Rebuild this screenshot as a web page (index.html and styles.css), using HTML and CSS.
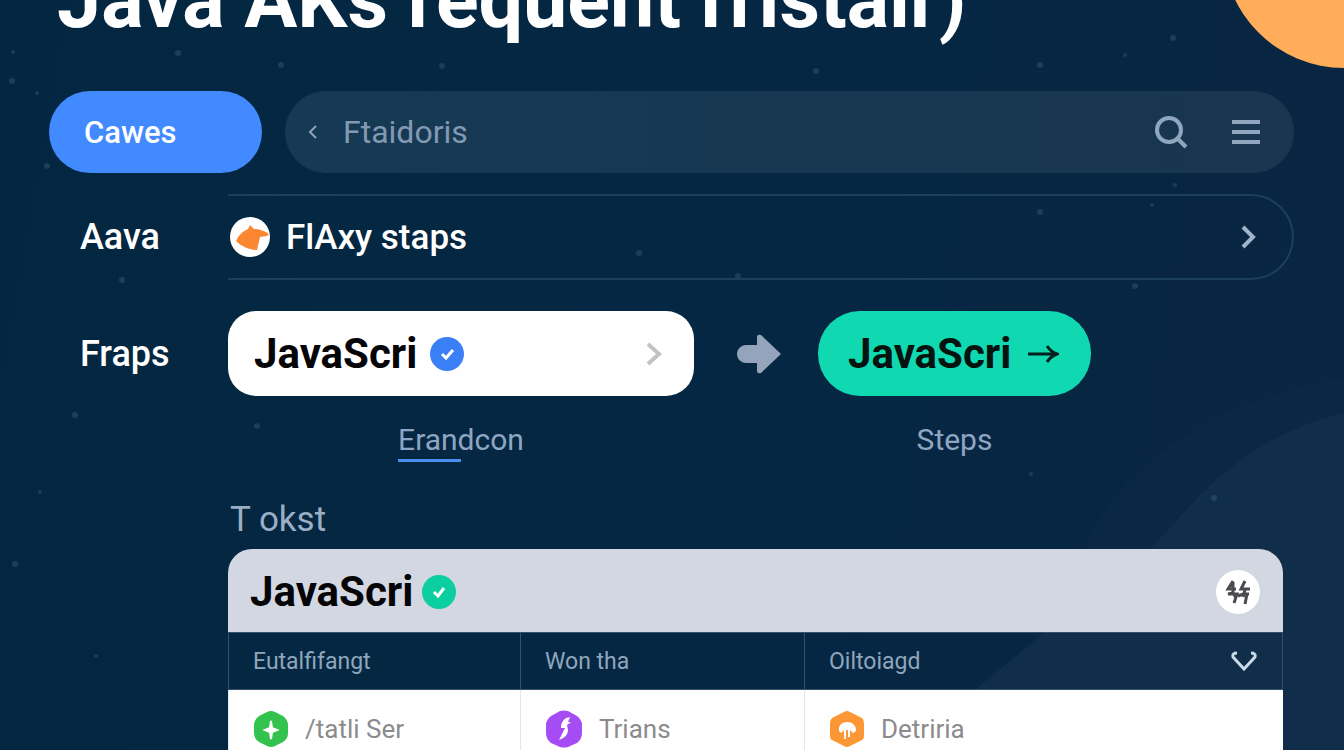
FILE: index.html
```
<!DOCTYPE html>
<html lang="en">
<head>
    <meta charset="utf-8">
    <title>Java steps</title>
    <link rel="stylesheet" href="styles.css">
</head>
<body>
    <!-- night sky behind the page -->
    <svg class="sky" viewBox="0 0 1344 750" preserveAspectRatio="xMaxYMin slice" aria-hidden="true">
        <path d="M1344 378C1240 395 1165 440 1120 490C1080 540 1050 620 1000 690V750H1344Z" fill="#0a2845"/>
        <path d="M1344 413C1280 428 1235 460 1200 495L1152 547C1110 590 1030 640 975 690V750H1344Z" fill="#102d49"/>
        <circle cx="1344" cy="-53" r="121" fill="#ffad5b"/>
        <g fill="#5d88a0" fill-opacity=".25">
            <circle cx="12" cy="81" r="3"/>
            <circle cx="13" cy="52" r="2"/>
            <circle cx="37" cy="93" r="2"/>
            <circle cx="178" cy="53" r="3"/>
            <circle cx="281" cy="65" r="3"/>
            <circle cx="442" cy="66" r="3"/>
            <circle cx="47" cy="166" r="3"/>
            <circle cx="122" cy="280" r="3"/>
            <circle cx="816" cy="71" r="3"/>
            <circle cx="1040" cy="65" r="3"/>
            <circle cx="1173" cy="38" r="3"/>
            <circle cx="1125" cy="55" r="2"/>
            <circle cx="639" cy="253" r="3"/>
            <circle cx="738" cy="276" r="3"/>
            <circle cx="1040" cy="212" r="3"/>
            <circle cx="1152" cy="205" r="2"/>
            <circle cx="1175" cy="185" r="2"/>
            <circle cx="1135" cy="286" r="3"/>
            <circle cx="75" cy="415" r="3"/>
            <circle cx="257" cy="426" r="3"/>
            <circle cx="15" cy="564" r="3"/>
            <circle cx="40" cy="492" r="2"/>
            <circle cx="96" cy="656" r="2"/>
            <circle cx="1214" cy="498" r="3"/>
            <circle cx="1031" cy="474" r="2"/>
        </g>
    </svg>

    <main class="page">
        <h1>Java AKs requent rristair)</h1>

        <div class="toolbar">
            <button class="primary">Cawes</button>
            <form class="search">
                <button type="button" class="icon-btn" aria-label="Back">
                    <svg width="12" height="16" viewBox="0 0 12 16"><path d="M9 2L3 8L9 14" fill="none" stroke="#8da3bb" stroke-width="2"/></svg>
                </button>
                <input type="text" value="Ftaidoris" aria-label="Search">
                <button type="submit" class="icon-btn" aria-label="Search">
                    <svg width="34" height="34" viewBox="0 0 34 34" fill="none" stroke="#8fa6be" stroke-width="4"><circle cx="15" cy="15" r="12"/><path d="M23 23L32 32"/></svg>
                </button>
                <button type="button" class="icon-btn" aria-label="Menu">
                    <svg width="28" height="24" viewBox="0 0 28 24" fill="#8fa6be"><path d="M0 0H28V4H0ZM0 10H28V14H0ZM0 20H28V24H0Z"/></svg>
                </button>
            </form>
        </div>

        <div class="row">
            <span class="label">Aava</span>
            <a class="step-link" href="#steps">
                <svg width="40" height="40" viewBox="0 0 40 40">
                    <circle cx="20" cy="20" r="20" fill="#fff"/>
                    <path d="M6 24C8 19 13 14 18 12L20 8L24 12C30 12 35 14 39 17L37 19L30 20C29 24 28 29 27 33C19 33 11 29 6 24Z" fill="#fc8732"/>
                </svg>
                <span class="step-name">FlAxy staps</span>
                <svg width="16" height="24" viewBox="0 0 16 24"><path d="M3 2L13 12L3 22" fill="none" stroke="#a3b3cc" stroke-width="4"/></svg>
            </a>
        </div>

        <div class="row" id="steps">
            <span class="label">Fraps</span>
            <div class="flow">
                <button class="card">
                    JavaScri
                    <svg width="36" height="36" viewBox="0 0 36 36"><circle cx="18" cy="18" r="17" fill="#3b7ff6"/><path d="M13 18L17 22L24 14" fill="none" stroke="#fff" stroke-width="3"/></svg>
                    <svg class="push" width="16" height="24" viewBox="0 0 16 24"><path d="M2 2L13 12L2 22" fill="none" stroke="#c3c3c5" stroke-width="4"/></svg>
                </button>
                <svg class="arrow" width="46" height="40" viewBox="0 0 46 40"><path d="M10 11H21V3Q21 0 25 1L45 20L25 39Q21 40 21 37V29H10C-2 28-2 12 10 11Z" fill="#94a4ba"/></svg>
                <button class="pill">
                    JavaScri
                    <svg width="32" height="20" viewBox="0 0 32 20"><path d="M1 10H30M20 2Q24 8 30 10Q24 12 20 18" fill="none" stroke="#03201e" stroke-width="3"/></svg>
                </button>
                <span class="caption active">Erandcon</span>
                <span class="caption second">Steps</span>
            </div>
        </div>

        <section class="panel">
            <h2>T okst</h2>
            <div class="panel-head">
                <span>JavaScri</span>
                <svg width="36" height="36" viewBox="0 0 36 36"><circle cx="18" cy="18" r="17" fill="#0ccf9f"/><path d="M13 18L17 22L23 14" fill="none" stroke="#fff" stroke-width="3"/></svg>
                <button class="icon-btn push" aria-label="Options">
                    <svg width="44" height="44" viewBox="0 0 44 44"><circle cx="22" cy="22" r="22" fill="#fff"/><path d="M17 11L12 19H20M17 12V23L12 24H21L18 33M17 23L20 28M29 11L25 19H34M22 26L27 24H33M29 20L27 27M31 24L29 34" fill="none" stroke="#4b4b4f" stroke-width="3"/></svg>
                </button>
            </div>
            <table>
                <thead>
                    <tr>
                        <th>Eutalfifangt</th>
                        <th>Won tha</th>
                        <th>
                            <div class="cell">
                                Oiltoiagd
                                <button class="icon-btn push" aria-label="Expand">
                                    <svg width="28" height="20" viewBox="0 0 28 20"><path d="M7 2Q2 2 3 6L14 18L25 6Q26 2 21 2" fill="none" stroke="#c9dbe8" stroke-width="3"/></svg>
                                </button>
                            </div>
                        </th>
                    </tr>
                </thead>
                <tbody>
                    <tr>
                        <td>
                            <div class="cell">
                                <svg width="36" height="38" viewBox="0 0 36 38"><path d="M14 2Q18 0 22 2L30 6Q35 10 35 15V23Q35 29 30 32L22 36Q18 38 14 36L6 32Q1 29 1 23V15Q1 10 6 6Z" fill="#32c24d"/><path d="M18 11L19 18L24 20L19 22L18 29L17 22L12 20L17 18Z" fill="#fff" stroke="#fff" stroke-width="2"/></svg>
                                /tatli Ser
                            </div>
                        </td>
                        <td>
                            <div class="cell">
                                <svg width="38" height="38" viewBox="0 0 38 38"><path d="M15 1Q19 0 23 1L32 6Q37 10 37 15V23Q37 29 32 33L23 37Q19 38 15 37L6 33Q1 29 1 23V15Q1 10 6 6Z" fill="#a64cf5"/><path d="M25 7Q16 8 16 18H20L14 30Q23 27 23 20L22 15L26 12H23Z" fill="#fff"/></svg>
                                Trians
                            </div>
                        </td>
                        <td>
                            <div class="cell">
                                <svg width="36" height="38" viewBox="0 0 36 38"><path d="M15 2Q18 0 21 2L33 8Q35 10 35 13V26Q35 29 33 30L21 36Q18 38 15 36L3 30Q1 29 1 26V13Q1 10 3 8Z" fill="#fd9735"/><path d="M10 21C8 9 28 9 27 21L24 23L21 20V27H19V20H17V29H15V20L12 23Z" fill="#fff"/></svg>
                                Detriria
                            </div>
                        </td>
                    </tr>
                </tbody>
            </table>
        </section>
    </main>
</body>
</html>
```
FILE: styles.css
```
* {
    box-sizing: border-box;
}

html {
    height: 100%;
    overflow: hidden;
}

body {
    margin: 0;
    height: 100%;
    overflow: hidden;
    font-family: Roboto, "Liberation Sans", sans-serif;
    color: #fff;
    background: linear-gradient(100deg, #042741, #052743 60%, #0a2541);
}

button, input {
    font: inherit;
    border: none;
    padding: 0;
    background: none;
}

button {
    cursor: pointer;
}

svg {
    flex: none;
    display: block;
}

.sky {
    position: absolute;
    top: 0;
    left: 0;
    width: 100%;
    height: 100%;
}

.page {
    position: relative;
    padding: 0 50px 0 49px;
}

h1 {
    margin: -44px 0 47px 8px;
    font-size: 79px;
    line-height: 88px;
    font-weight: 700;
    white-space: nowrap;
}

.toolbar {
    display: flex;
    gap: 23px;
    margin-bottom: 21px;
}

.primary {
    width: 213px;
    height: 82px;
    padding-left: 35px;
    border-radius: 41px;
    background: #418aff;
    color: #fff;
    font-size: 31px;
    font-weight: 500;
    text-align: left;
}

.search {
    flex: 1;
    display: flex;
    align-items: center;
    height: 82px;
    gap: 44px;
    padding: 0 34px 0 22px;
    border-radius: 41px;
    background: linear-gradient(90deg, #163a54, #19354f);
}

.search input {
    flex: 1;
    min-width: 0;
    margin-left: -20px;
    color: #8299b1;
    font-size: 32px;
    outline: none;
}

.row {
    display: flex;
    margin-bottom: 31px;
}

.label {
    width: 179px;
    flex: none;
    padding-left: 31px;
    font-size: 36px;
    line-height: 86px;
    font-weight: 500;
}

.step-link {
    flex: 1;
    display: flex;
    align-items: center;
    gap: 16px;
    height: 86px;
    padding: 0 36px 0 2px;
    border: 2px solid #1d405a;
    border-left: none;
    border-radius: 0 43px 43px 0;
    color: #fff;
    font-size: 35px;
    font-weight: 500;
    text-decoration: none;
}

.step-name {
    flex: 1;
}

.flow {
    flex: 1;
    display: grid;
    grid-template-columns: minmax(0, 466px) 124px 273px;
    align-items: center;
}

.card, .pill {
    display: flex;
    align-items: center;
    height: 85px;
    color: #050507;
    font-size: 42px;
    font-weight: 700;
}

.card {
    gap: 12px;
    padding: 0 32px 0 26px;
    border-radius: 28px;
    background: #fff;
}

.pill {
    gap: 16px;
    padding-left: 30px;
    border-radius: 42px;
    background: #10d9b2;
    color: #03130f;
}

.push {
    margin-left: auto;
}

.arrow {
    justify-self: center;
    margin-left: 6px;
}

.caption {
    position: relative;
    justify-self: center;
    margin-top: 24px;
    color: #8fa6c2;
    font-size: 30px;
    line-height: 40px;
}

.caption.second {
    grid-column: 3;
}

.caption.active::after {
    content: "";
    position: absolute;
    left: 0;
    bottom: -2px;
    width: 50%;
    height: 3px;
    background: #4a8ff0;
}

.panel {
    margin: 0 11px 0 179px;
}

h2 {
    margin: 0;
    padding-left: 2px;
    color: #9aafc6;
    font-size: 35px;
    line-height: 58px;
    font-weight: 400;
}

.panel-head {
    display: flex;
    align-items: center;
    gap: 8px;
    height: 83px;
    padding: 2px 23px 0 22px;
    border-radius: 24px 24px 0 0;
    background: #d2d7e2;
    color: #050507;
    font-size: 42px;
    font-weight: 700;
}

table {
    width: 100%;
    table-layout: fixed;
    border-collapse: collapse;
}

th, td {
    padding: 0 24px;
    text-align: left;
    font-weight: 400;
}

th {
    height: 57px;
    border: 1px solid #34506a;
    color: #8fa6bc;
    font-size: 23px;
}

th:nth-child(1) {
    width: 292px;
}

th:nth-child(2) {
    width: 284px;
}

td {
    height: 78px;
    border-left: 1px solid #e3e5ea;
    background: #fff;
    color: #8b8b8e;
    font-size: 26px;
}

.cell {
    display: flex;
    align-items: center;
    gap: 16px;
}
```
